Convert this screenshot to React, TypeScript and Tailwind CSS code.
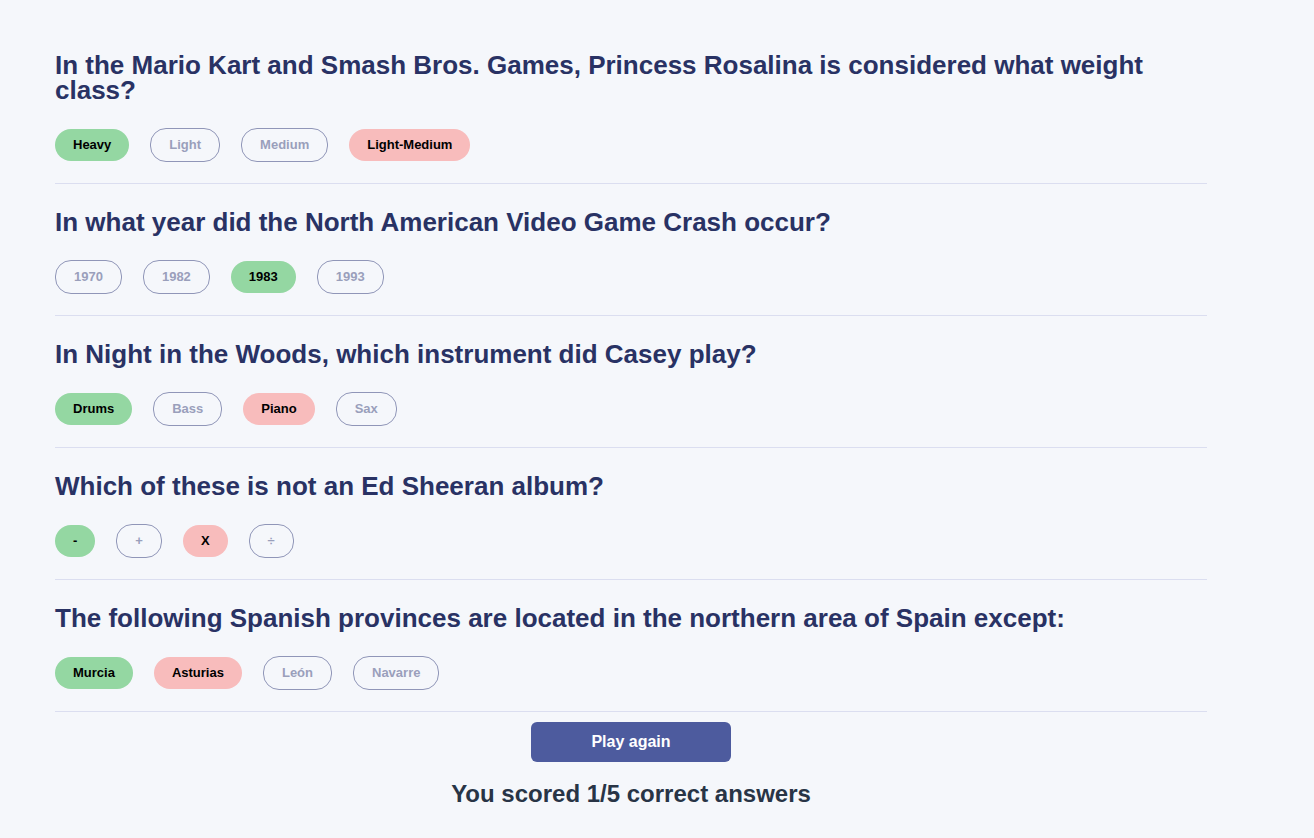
import React from 'react';

type Question = {
  question: string;
  answers: string[];
  correct: number;
  picked: number;
};

const QUESTIONS: Question[] = [
  {
    question: 'In the Mario Kart and Smash Bros. Games, Princess Rosalina is considered what weight class?',
    answers: ['Heavy', 'Light', 'Medium', 'Light-Medium'],
    correct: 0,
    picked: 3,
  },
  {
    question: 'In what year did the North American Video Game Crash occur?',
    answers: ['1970', '1982', '1983', '1993'],
    correct: 2,
    picked: 2,
  },
  {
    question: 'In Night in the Woods, which instrument did Casey play?',
    answers: ['Drums', 'Bass', 'Piano', 'Sax'],
    correct: 0,
    picked: 2,
  },
  {
    question: 'Which of these is not an Ed Sheeran album?',
    answers: ['-', '+', 'X', '÷'],
    correct: 0,
    picked: 2,
  },
  {
    question: 'The following Spanish provinces are located in the northern area of Spain except:',
    answers: ['Murcia', 'Asturias', 'León', 'Navarre'],
    correct: 0,
    picked: 1,
  },
];

function Answer({ text, state }: { text: string; state: 'correct' | 'wrong' | 'idle' }) {
  if (state === 'idle') {
    return (
      <span className="px-[18px] py-2 leading-[16px] text-[13px] font-bold rounded-[16px] border border-[#9096b8] text-[#9a9fbb]">
        {text}
      </span>
    );
  }
  return (
    <span
      className={`px-[18px] py-2 leading-[16px] text-[13px] font-bold rounded-[16px] text-black ${
        state === 'correct' ? 'bg-[#94d7a2]' : 'bg-[#f8bcbc]'
      }`}
    >
      {text}
    </span>
  );
}

export default function App() {
  const score = QUESTIONS.filter((q) => q.picked === q.correct).length;

  return (
    <div
      className="min-h-screen bg-[#f5f7fb] pt-[27px] pl-[55px]"
      style={{ fontFamily: '"Liberation Sans", Arial, sans-serif' }}
    >
      <div className="w-[1152px]">
        {QUESTIONS.map((q, i) => (
          <div key={i} className="pt-[26px] pb-[21px] border-b border-[#dbdef0]">
            <h2 className="text-[26px] leading-[25px] font-bold text-[#293264] mb-[25px] pr-12">
              {q.question}
            </h2>
            <div className="flex items-center gap-[21px]">
              {q.answers.map((a, j) => (
                <Answer
                  key={j}
                  text={a}
                  state={j === q.correct ? 'correct' : j === q.picked ? 'wrong' : 'idle'}
                />
              ))}
            </div>
          </div>
        ))}

        <div className="flex flex-col items-center mt-[10px]">
          <button className="w-[200px] h-[40px] rounded-[6px] bg-[#4d5b9e] text-white text-[16px] font-bold">
            Play again
          </button>
          <p className="mt-[14px] text-[24px] font-bold text-[#283446]">
            You scored {score}/5 correct answers
          </p>
        </div>
      </div>
    </div>
  );
}
